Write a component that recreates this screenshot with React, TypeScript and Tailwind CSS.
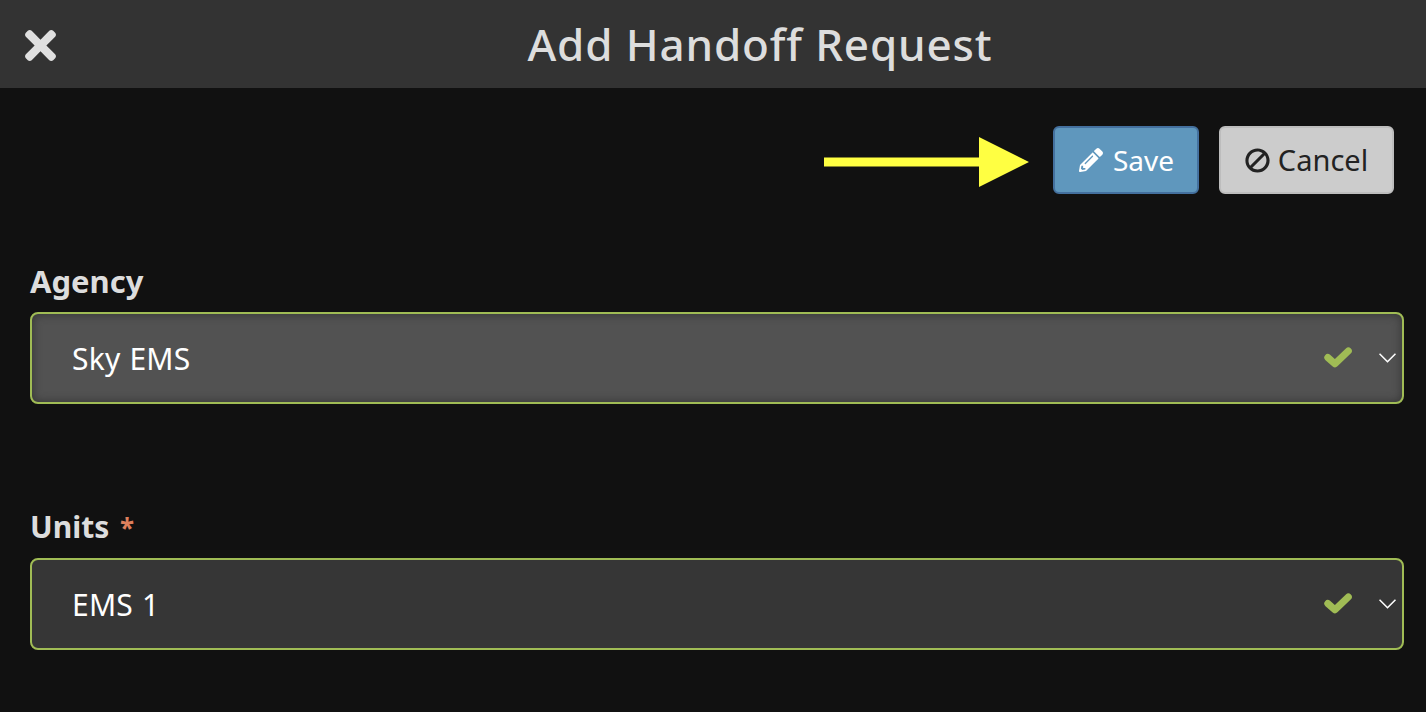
import { FaBan, FaPencilAlt, FaTimes } from "react-icons/fa";

function SelectField({ value, inset }: { value: string; inset?: boolean }) {
  return (
    <div
      className={
        "flex h-[92px] items-center rounded-[8px] border-2 border-[#a0bc55] pl-[40px] pr-[6px] " +
        (inset ? "bg-[#525252] shadow-[inset_0_0_10px_#333333]" : "bg-[#363636]")
      }
    >
      <span className="flex-1 text-[30px] tracking-[0.2px] text-white [word-spacing:1px]">{value}</span>
      <svg className="mr-[27px] h-[24px] w-[28px]" viewBox="0 0 28 24" fill="none" stroke="#a0bc55" strokeWidth={7} strokeLinecap="round" strokeLinejoin="round" aria-hidden>
        <path d="M3.8 11.5 11 17.8 24.3 5" />
      </svg>
      <svg className="h-[10px] w-[17px]" viewBox="0 0 17 10" fill="none" stroke="#ffffff" strokeWidth={1.6} aria-hidden>
        <path d="M0.5 0.7 8.5 8.7 16.5 0.7" />
      </svg>
    </div>
  );
}

export default function App() {
  return (
    <div className="relative flex h-[712px] w-[1426px] flex-col overflow-hidden bg-[#111111] font-['Noto_Sans',sans-serif]">
      <header className="flex h-[88px] shrink-0 items-center bg-[#333333] pl-[25px]">
        <FaTimes className="mt-[3px] h-[45px] w-[31px] text-[#e0e0e0]" />
        <h1 className="flex-1 pl-[38px] text-center text-[44px] leading-none font-medium tracking-[0.85px] text-[#dddddd]">
          Add Handoff Request
        </h1>
      </header>

      <div className="flex justify-end gap-[20px] pr-[32px] pt-[38px]">
        <button
          type="button"
          className="flex h-[68px] w-[146px] items-center justify-center gap-[10px] rounded-[6px] border-2 border-[#44709e] bg-[#5f97bd] pl-[1px] text-[28px] text-white"
        >
          <FaPencilAlt className="h-[24px] w-[24px]" />
          Save
        </button>
        <button
          type="button"
          className="flex h-[68px] w-[175px] items-center justify-center gap-[8px] rounded-[6px] border-2 border-[#bdbdbd] bg-[#cccccc] text-[29px] text-[#222222]"
        >
          <FaBan className="h-[25px] w-[25px] -scale-x-100" />
          Cancel
        </button>
      </div>

      <form className="flex flex-col pl-[30px] pr-[22px] pt-[67px]">
        <label className="mb-[11px] text-[31px] leading-[40px] font-bold text-[#dddddd]">Agency</label>
        <SelectField value="Sky EMS" inset />
        <label className="mb-[10px] mt-[103px] text-[30px] leading-[40px] font-bold text-[#dddddd]">
          Units <span className="ml-[3px] text-[26px] text-[#dd7f5c]">*</span>
        </label>
        <SelectField value="EMS 1" />
      </form>

      {/* annotation arrow over the page */}
      <svg className="absolute left-[824px] top-[137px] h-[50px] w-[206px]" viewBox="0 0 206 50" aria-hidden>
        <path d="M0 20.5H155V0L205 25 155 50V29.5H0Z" fill="#ffff42" />
      </svg>
    </div>
  );
}
